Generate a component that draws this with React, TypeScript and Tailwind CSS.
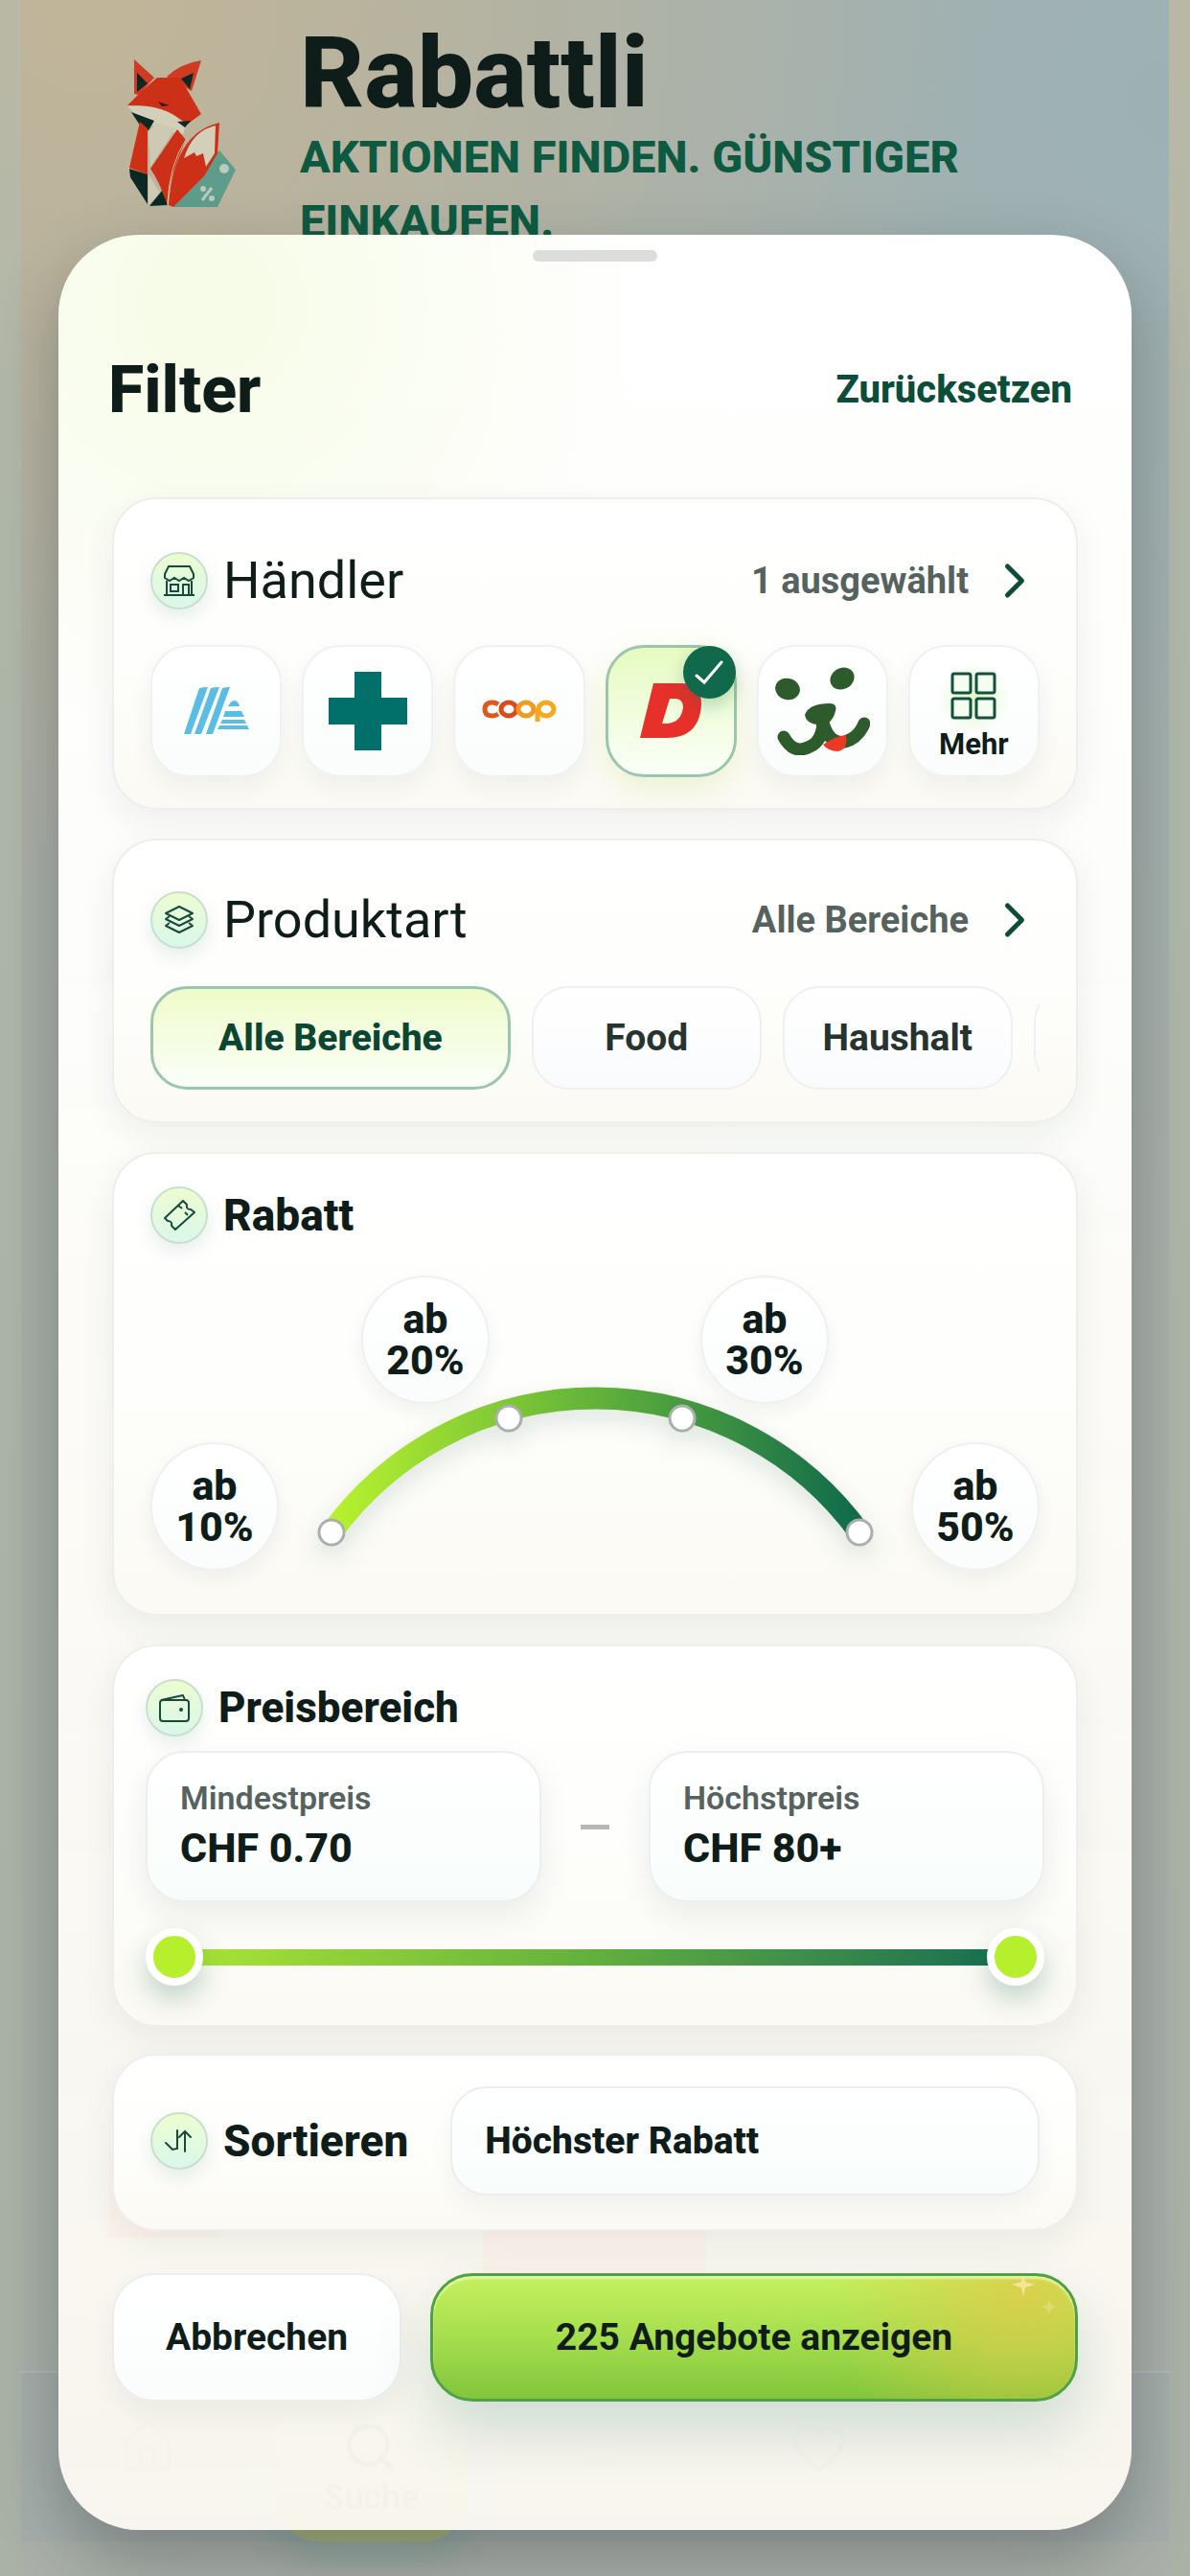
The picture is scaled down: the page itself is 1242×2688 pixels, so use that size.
import type { ReactNode } from "react";
import { ChevronRight, Heart, House, List, Search, User } from "lucide-react";

const DISCOUNT_DOTS = [
  { x: 15, y: 154 },
  { x: 200, y: 35 },
  { x: 381, y: 35 },
  { x: 566, y: 154 },
];

function FoxLogo() {
  return (
    <svg viewBox="0 0 114 158" className="h-[158px] w-[114px]" aria-label="Rabattli Fuchs">
      <path d="M92 99 L96 95 L113 115 L94 154 L48 154 L80 122 Z" fill="#5e9c8b" />
      <circle cx="101" cy="114" r="5" fill="#bcc9bd" />
      <path d="M78 147 L88 134" stroke="#bcc9bd" strokeWidth="3" />
      <circle cx="79" cy="135" r="3" fill="#bcc9bd" />
      <circle cx="88" cy="145" r="3" fill="#bcc9bd" />
      <path d="M7 0 L28 19 L12 37 L7 36 Z" fill="#cf3a22" />
      <path d="M10 14 L21 25 L10 34 Z" fill="#0c2823" />
      <path d="M77 1 L67 33 L41 18 Q56 4 77 1 Z" fill="#cf3a22" />
      <path d="M69 14 L65 31 L56 20 Z" fill="#0c2823" />
      <path d="M31 19 L55 19 L77 57 L62 68 Q40 47 0 48 L15 33 Z" fill="#cc3016" />
      <path d="M32 44 L44 48 L36 49 Z" fill="#3c1712" />
      <path d="M0 49 Q40 45 61 69 L58 78 Q20 72 0 49 Z" fill="#d3cfb8" />
      <path d="M52 65 L66 64 L60 71 Z" fill="#0c2823" />
      <path d="M4 55 L28 64 L22 74 L14 70 Z" fill="#0c2823" />
      <path d="M13 65 L21 72 L21 120 L2 113 Z" fill="#cc3016" />
      <path d="M22 76 L30 66 L50 72 L24 112 Z" fill="#cdc9b2" />
      <path d="M2 114 L21 120 L21 151 L3 123 Z" fill="#0c2823" />
      <path d="M22 120 L34 139 L22 152 Z" fill="#cdc9b2" />
      <path d="M24 114 L52 73 L61 84 Q44 120 41 152 Q35 130 24 114 Z" fill="#cc3016" />
      <path d="M36 137 L42 152 L23 153 Z" fill="#0c2823" />
      <path d="M43 152 Q48 77 96 66 L94 98 L80 122 L48 154 Z" fill="#cc3016" />
      <path d="M59 103 Q68 74 92 69 L91 98 L82 112 L79 98 L72 101 L70 97 Z" fill="#d3cfb8" />
      <path d="M42 152 Q43 110 62 82" stroke="#d9b896" strokeWidth="1" fill="none" />
    </svg>
  );
}

function StoreIcon() {
  return (
    <svg viewBox="0 0 34 34" className="size-[34px]" fill="none" stroke="#174a3b" strokeWidth="2">
      <path d="M6 2 H28 L32 10 V14 L27 17 L22 14 L17 17 L12 14 L7 17 L2 14 V10 Z" />
      <path d="M4 17 V32 M30 17 V32 M1 32 H33 M8 21 H16 V28 H8 Z M21 32 V21 H27 V32" />
    </svg>
  );
}

function LayersIcon() {
  return (
    <svg viewBox="0 0 34 34" className="size-[34px]" fill="none" stroke="#174a3b" strokeWidth="2" strokeLinejoin="round">
      <path d="M17 3 L31 10 L17 17 L3 10 Z" />
      <path d="M7 13 L3 16 L17 23 L31 16 L27 13 M7 20 L3 23 L17 30 L31 23 L27 20" />
    </svg>
  );
}

function TicketIcon() {
  return (
    <svg viewBox="0 0 34 34" className="size-[34px]" fill="none" stroke="#174a3b" strokeWidth="2" strokeLinejoin="round">
      <path d="M21 2 L25 6 Q24 11 29 11 L33 14 L13 32 L9 28 Q10 23 5 23 L2 20 Z" />
      <path d="M16 7 L20 10 M23 14 L26 17" />
    </svg>
  );
}

function WalletIcon() {
  return (
    <svg viewBox="0 0 34 34" className="size-[34px]" fill="none" stroke="#174a3b" strokeWidth="2" strokeLinejoin="round">
      <rect x="2" y="9" width="30" height="22" rx="3" />
      <path d="M3 9 L26 4 L28 9" />
      <circle cx="24" cy="19" r="2" fill="#174a3b" stroke="none" />
    </svg>
  );
}

function SortIcon() {
  return (
    <svg viewBox="0 0 34 34" className="size-[34px]" fill="none" stroke="#174a3b" strokeWidth="2" strokeLinecap="round">
      <path d="M3 19 L10 26 L15 25 V6 M23 28 V7 M17 13 L23 7 L29 13" />
    </svg>
  );
}

function GridIcon() {
  return (
    <svg viewBox="0 0 48 50" className="h-[50px] w-12" fill="#f3fdf0" stroke="#14503d" strokeWidth="3">
      <rect x="2" y="2" width="19" height="20" rx="2" />
      <rect x="27" y="2" width="19" height="20" rx="2" />
      <rect x="2" y="28" width="19" height="20" rx="2" />
      <rect x="27" y="28" width="19" height="20" rx="2" />
    </svg>
  );
}

function AldiLogo() {
  return (
    <svg viewBox="0 0 68 50" className="h-[50px] w-[68px]" fill="#5bbde4">
      <path d="M16 1 Q19 0 25 0 L7 49 H0 Z M28 1 Q31 0 37 0 L18 49 H11 Z M40 1 Q43 0 48 0 L30 49 H23 Z" />
      <path d="M46 20 Q49 14 53 14 Q57 15 58 20 Z M43 25 H60 L63 31 H41 Z M40 34 H63 L65 38 H38 Z M37 40 H66 L68 44 H35 Z" />
    </svg>
  );
}

function PlusLogo() {
  return (
    <svg viewBox="0 0 82 82" className="size-[82px]" fill="#02706a">
      <path d="M27 0 H55 V27 H82 V55 H55 V82 H27 V55 H0 V27 H27 Z" />
    </svg>
  );
}

function CoopLogo() {
  return (
    <svg viewBox="0 0 78 24" className="h-6 w-[78px]" fill="none" strokeWidth="5">
      <path d="M17 5 Q14 3 11 3 Q3 3 3 10 Q3 17 11 17 Q14 17 17 15" stroke="#dd5a1c" />
      <ellipse cx="28" cy="10" rx="8" ry="7" stroke="#d94a1c" />
      <ellipse cx="46" cy="10" rx="8" ry="7" stroke="#f09a21" />
      <path d="M58 23 V10" stroke="#f5a81e" />
      <ellipse cx="67" cy="10" rx="8" ry="7" stroke="#f5a81e" />
    </svg>
  );
}

function DennerLogo() {
  return (
    <svg viewBox="0 0 64 58" className="h-[58px] w-16" fill="#e8302a" fillRule="evenodd">
      <path d="M14 0 H42 Q64 0 64 22 Q62 57 28 57 H0 Z M31 16 L23 42 H28 Q43 41 45 25 Q45 16 36 16 Z" />
    </svg>
  );
}

function DogLogo() {
  return (
    <svg viewBox="0 0 100 92" className="h-[92px] w-[100px]" fill="#2e5b2b">
      <ellipse cx="14" cy="23" rx="13" ry="11" transform="rotate(15 14 23)" />
      <ellipse cx="71" cy="12" rx="13" ry="11" transform="rotate(-30 71 12)" />
      <path d="M32 50 Q36 38 58 38 Q66 38 64 46 Q62 54 57 58 L58 68 H44 L44 60 Q33 58 32 50 Z" />
      <path d="M10 73 Q20 91 35 84 Q50 79 51 58 Q58 82 74 78 Q88 74 94 59" fill="none" stroke="#2e5b2b" strokeWidth="13" strokeLinecap="round" />
      <path d="M51 81 Q64 72 75 71 Q77 87 66 88 Q57 88 51 81 Z" fill="#ea3a25" />
    </svg>
  );
}

function Card({ className, children }: { className: string; children: ReactNode }) {
  return (
    <section
      className={`rounded-[46px] border-2 border-[#eeeeea] bg-linear-to-b from-white via-[#fefefc] to-[#fbfaf4] shadow-[0_12px_36px_rgba(30,50,40,0.07)] ${className}`}
    >
      {children}
    </section>
  );
}

function IconBadge({ children }: { children: ReactNode }) {
  return (
    <span className="flex size-[60px] shrink-0 items-center justify-center rounded-full border-2 border-[#c9dfcd] bg-linear-to-b from-[#ecfdd0] to-[#d9f7ea] shadow-[0_8px_18px_rgba(20,100,70,0.10)]">
      {children}
    </span>
  );
}

function StoreTile({ label, selected, children }: { label: string; selected?: boolean; children: ReactNode }) {
  return (
    <button
      type="button"
      aria-label={label}
      aria-pressed={!!selected}
      className={
        selected
          ? "relative flex h-[138px] items-center justify-center rounded-[40px] border-3 border-[#9cc5ad] bg-linear-to-b from-[#e6fbc0] to-[#fafff8] shadow-[0_10px_30px_rgba(190,220,90,0.25)]"
          : "relative flex h-[138px] items-center justify-center rounded-[40px] border-2 border-[#f0f1f2] bg-linear-to-b from-white to-[#fafdfc] shadow-[0_10px_24px_rgba(30,50,40,0.06)]"
      }
    >
      {children}
      {selected && (
        <span className="absolute -top-0.5 -right-0.5 flex size-[55px] items-center justify-center rounded-full bg-[#11694c] shadow-[0_8px_18px_rgba(17,105,76,0.25)]">
          <svg viewBox="0 0 30 26" className="h-[26px] w-[30px]" fill="none" stroke="#fff" strokeWidth="3" strokeLinecap="round">
            <path d="M2 16 L10 23 L28 2" />
          </svg>
        </span>
      )}
    </button>
  );
}

function DiscountButton({ value }: { value: string }) {
  return (
    <button
      type="button"
      className="size-[134px] rounded-full border-2 border-[#eef0f1] bg-linear-to-b from-white to-[#fafdfc] px-4 text-[43px] leading-[43px] font-extrabold shadow-[0_8px_20px_rgba(30,50,40,0.06)]"
    >
      ab {value}
    </button>
  );
}

function PriceField({ id, label, value }: { id: string; label: string; value: string }) {
  return (
    <div className="flex h-[158px] min-w-0 flex-1 flex-col justify-center rounded-[40px] border-2 border-[#edefee] bg-linear-to-b from-white to-[#f8fdfb] px-[34px] shadow-[0_14px_34px_rgba(30,50,40,0.08)]">
      <label htmlFor={id} className="text-[34px] leading-[44px] font-semibold text-[#56625e]">
        {label}
      </label>
      <input id={id} defaultValue={value} className="h-[60px] w-full bg-transparent text-[43px] font-extrabold outline-none" />
    </div>
  );
}

function BottomNav() {
  return (
    <nav className="mx-[15px] mb-9 grid grid-cols-5 text-[#26332f]">
      <a href="#home" aria-label="Home" className="flex h-[164px] flex-col items-center pt-9 opacity-40">
        <House className="size-[60px]" />
      </a>
      <a
        href="#suche"
        className="mx-[18px] flex h-[164px] flex-col items-center rounded-[44px] bg-[#a9b47f] pt-9 text-[36px] leading-[44px] font-semibold text-[#56625e] shadow-[0_20px_30px_rgba(90,150,140,0.25)]"
      >
        <Search className="size-[60px]" />
        Suche
      </a>
      <a href="#liste" aria-label="Liste" className="flex h-[164px] flex-col items-center pt-9 opacity-20">
        <List className="size-[60px]" />
      </a>
      <a href="#favoriten" aria-label="Favoriten" className="flex h-[164px] flex-col items-center pt-9 opacity-40">
        <Heart className="size-[60px]" />
      </a>
      <a href="#konto" aria-label="Konto" className="flex h-[164px] flex-col items-center pt-9 opacity-20">
        <User className="size-[60px]" />
      </a>
    </nav>
  );
}

export default function App() {
  return (
    <div className="grid min-h-screen grid-cols-1 bg-linear-to-b from-[#b9b8a4] via-[#b1b9ab] via-20% to-[#aab2a8] px-[22px] font-['Roboto',sans-serif] text-[#0f1d1a]">
      <div className="col-start-1 row-start-1 flex flex-col justify-between bg-[radial-gradient(circle_at_6%_0%,#c1b598_0%,rgba(193,181,152,0)_32%),radial-gradient(circle_at_100%_4%,#9db1b4_0%,rgba(157,177,180,0)_44%)] bg-[#abb0aa]">
        <header className="flex items-start gap-[66px] px-[111px] pt-6">
          <div className="pt-[38px]">
            <FoxLogo />
          </div>
          <div>
            <h1 className="text-[104px] leading-[106px] font-extrabold">Rabattli</h1>
            <p className="text-[47px] leading-[67px] font-extrabold text-[#0e5a41]">AKTIONEN FINDEN. GÜNSTIGER EINKAUFEN.</p>
          </div>
        </header>
        <div>
          <div className="flex items-end gap-[274px] px-[91px] pb-[100px]">
            <span className="mb-10 h-[90px] w-[117px] bg-[#d8503f]" />
            <span className="h-[90px] w-[233px] bg-[#d8503f]" />
          </div>
          <div className="border-t-2 border-[#b3b9b7] bg-[#a5aeab] pt-3">
            <BottomNav />
          </div>
        </div>
      </div>

      <main className="z-10 col-start-1 row-start-1 mx-[39px] mt-[245px] mb-12 flex flex-col self-start rounded-[84px] bg-[radial-gradient(circle_at_14%_3%,#f6fce6_0%,rgba(255,255,255,0)_18%),linear-gradient(to_bottom,#ffffff_0%,#fdfdfb_30%,rgba(252,249,242,0.95)_100%)] px-14 shadow-[0_30px_70px_rgba(20,30,30,0.3)]">
        <div className="mx-auto mt-4 h-3 w-[130px] rounded-full bg-[#dcdedb]" />
        <div className="mt-[86px] flex h-[96px] items-center justify-between pr-[6px]">
          <h2 className="-ml-1 text-[68px] leading-none font-extrabold">Filter</h2>
          <button type="button" className="text-[40px] font-extrabold text-[#0b4d38]">
            Zurücksetzen
          </button>
        </div>

        <Card className="mt-16 px-[38px] pt-[54px] pb-8">
          <div className="flex h-[62px] items-center justify-between">
            <div className="flex items-center gap-4">
              <IconBadge>
                <StoreIcon />
              </IconBadge>
              <h3 className="text-[54px] leading-[60px]">Händler</h3>
            </div>
            <button type="button" className="-mr-1 flex items-center gap-[18px] text-[38px] font-bold text-[#56625e]">
              1 ausgewählt
              <ChevronRight className="size-[60px] text-[#0b4d38]" strokeWidth={2} />
            </button>
          </div>
          <div className="mt-9 grid grid-cols-6 gap-[21px]">
            <StoreTile label="Aldi">
              <AldiLogo />
            </StoreTile>
            <StoreTile label="Migros">
              <PlusLogo />
            </StoreTile>
            <StoreTile label="Coop">
              <CoopLogo />
            </StoreTile>
            <StoreTile label="Denner" selected>
              <DennerLogo />
            </StoreTile>
            <StoreTile label="Volg">
              <DogLogo />
            </StoreTile>
            <StoreTile label="Mehr">
              <span className="flex flex-col items-center gap-2 bg-[radial-gradient(circle_at_50%_38%,#ddf8c8_0%,rgba(255,255,255,0)_50%)] pt-3">
                <GridIcon />
                <span className="text-[31px] leading-[36px] font-bold">Mehr</span>
              </span>
            </StoreTile>
          </div>
        </Card>

        <Card className="mt-[30px] px-[38px] pt-[52px] pb-[33px]">
          <div className="flex h-[62px] items-center justify-between">
            <div className="flex items-center gap-4">
              <IconBadge>
                <LayersIcon />
              </IconBadge>
              <h3 className="text-[54px] leading-[60px]">Produktart</h3>
            </div>
            <button type="button" className="-mr-1 flex items-center gap-[18px] text-[38px] font-bold text-[#56625e]">
              Alle Bereiche
              <ChevronRight className="size-[60px] text-[#0b4d38]" strokeWidth={2} />
            </button>
          </div>
          <div className="mt-[38px] flex gap-[22px] overflow-hidden">
            <button type="button" className="h-[108px] shrink-0 rounded-[38px] border-3 border-[#9cc5ad] bg-linear-to-b from-[#effbc9] to-[#fafff8] px-[68px] text-[39px] font-extrabold text-[#0b4634]">
              Alle Bereiche
            </button>
            {["Food", "Haushalt", ""].map((name) => (
              <button
                key={name}
                type="button"
                className="h-[108px] min-w-[240px] shrink-0 rounded-[38px] border-2 border-[#eef0f1] bg-linear-to-b from-white to-[#fafbfd] px-[38px] text-[39px] font-bold text-[#26332f]"
              >
                {name}
              </button>
            ))}
          </div>
        </Card>

        <Card className="mt-[30px] px-[38px] pt-[33px] pb-[45px]">
          <div className="flex h-[62px] items-center gap-4">
            <IconBadge>
              <TicketIcon />
            </IconBadge>
            <h3 className="text-[46px] font-extrabold">Rabatt</h3>
          </div>
          <div className="mt-8 grid">
            <svg
              viewBox="0 0 581 180"
              className="col-start-1 row-start-1 mb-[14px] h-[180px] w-[581px] self-end justify-self-center overflow-visible drop-shadow-[0_10px_12px_rgba(20,80,60,0.14)]"
              fill="none"
            >
              <defs>
                <linearGradient id="discount-arc" x1="0" x2="1" y1="0" y2="0">
                  <stop offset="0" stopColor="#b8f22e" />
                  <stop offset="0.5" stopColor="#62b23a" />
                  <stop offset="1" stopColor="#0f6a4b" />
                </linearGradient>
              </defs>
              <path d="M15 154 A341 341 0 0 1 566 154" stroke="url(#discount-arc)" strokeWidth="23" />
              {DISCOUNT_DOTS.map((dot) => (
                <circle key={dot.x} cx={dot.x} cy={dot.y} r="13" fill="#fff" stroke="#a9b0ac" strokeWidth="3" />
              ))}
            </svg>
            <div className="col-start-1 row-start-1 flex flex-col gap-10">
              <div className="flex justify-center gap-[220px]">
                <DiscountButton value="20%" />
                <DiscountButton value="30%" />
              </div>
              <div className="flex justify-between">
                <DiscountButton value="10%" />
                <DiscountButton value="50%" />
              </div>
            </div>
          </div>
        </Card>

        <Card className="mt-[30px] px-[33px] pt-[33px] pb-10">
          <div className="flex h-[62px] items-center gap-4">
            <IconBadge>
              <WalletIcon />
            </IconBadge>
            <h3 className="text-[44px] font-extrabold">Preisbereich</h3>
          </div>
          <div className="mt-[14px] flex items-center">
            <PriceField id="min-price" label="Mindestpreis" value="CHF 0.70" />
            <span className="mx-[41px] h-[5px] w-[30px] bg-[#b3b8b5]" />
            <PriceField id="max-price" label="Höchstpreis" value="CHF 80+" />
          </div>
          <div className="mt-[26px] flex h-[62px] items-center">
            <button type="button" aria-label="Mindestpreis ändern" className="z-10 size-[60px] rounded-full border-8 border-white bg-[#b6f02c] shadow-[0_14px_28px_rgba(20,100,70,0.25)]" />
            <div className="-mx-2 h-[17px] flex-1 bg-linear-to-r from-[#a9e334] via-[#62b03c] to-[#16704f]" />
            <button type="button" aria-label="Höchstpreis ändern" className="z-10 size-[60px] rounded-full border-8 border-white bg-[#b6f02c] shadow-[0_14px_28px_rgba(20,100,70,0.25)]" />
          </div>
        </Card>

        <Card className="mt-7 flex items-center gap-4 px-[38px] pt-8 pb-[35px]">
          <IconBadge>
            <SortIcon />
          </IconBadge>
          <label htmlFor="sort" className="text-[46px] font-extrabold">
            Sortieren
          </label>
          <select
            id="sort"
            className="ml-7 h-[114px] min-w-0 flex-1 appearance-none rounded-[38px] border-2 border-[#eceeed] bg-linear-to-b from-white to-[#f8fdfb] px-[34px] text-[39px] font-extrabold shadow-[0_10px_26px_rgba(30,50,40,0.05)]"
          >
            <option>Höchster Rabatt</option>
          </select>
        </Card>

        <div className="mt-11 mb-[134px] flex gap-[30px]">
          <button type="button" className="h-[134px] w-[302px] rounded-[44px] border-2 border-[#eceeec] bg-linear-to-b from-white to-[#fafdfc] text-[39px] font-bold shadow-[0_12px_30px_rgba(30,50,40,0.06)]">
            Abbrechen
          </button>
          <button
            type="button"
            className="relative h-[134px] flex-1 rounded-[44px] border-3 border-[#4fa046] bg-[radial-gradient(circle_at_92%_15%,rgba(225,200,70,0.75)_0%,rgba(225,200,70,0)_32%),linear-gradient(to_bottom,#c5f05e_0%,#a5de4d_50%,#82c53c_100%)] text-[39px] font-bold shadow-[0_30px_60px_rgba(20,110,80,0.18),inset_0_3px_2px_rgba(240,255,190,0.7)]"
          >
            225 Angebote anzeigen
            <svg viewBox="0 0 60 50" className="absolute top-0 right-3 h-[50px] w-[60px]" fill="#fbe9a6">
              <path d="M18 -6 L20 6 L30 9 L20 12 L18 22 L16 12 L6 9 L16 6 Z" opacity="0.8" />
              <path d="M45 24 L47 30 L53 32 L47 34 L45 40 L43 34 L37 32 L43 30 Z" opacity="0.4" />
            </svg>
          </button>
        </div>
      </main>
    </div>
  );
}
